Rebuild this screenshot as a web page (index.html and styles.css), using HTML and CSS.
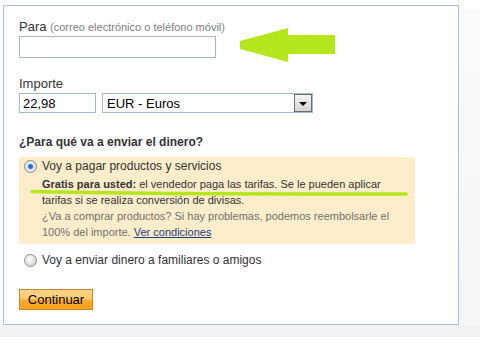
FILE: index.html
```html
<!DOCTYPE html>
<html>
<head>
	<meta charset="utf-8">
	<title>Enviar dinero</title>
	<link rel="stylesheet" href="styles.css">
</head>
<body>
	<div class="page">
		<div class="top">
			<div class="panel">
				<div class="field">
					<label class="lbl" for="to">Para <span class="hint">(correo electrónico o teléfono móvil)</span></label>
					<input id="to" class="txt to" type="text">
				</div>
				<div class="field">
					<label class="lbl" for="amt">Importe</label>
					<div class="row">
						<input id="amt" class="txt amt" type="text" value="22,98">
						<div class="sel">
							<span class="sel-val">EUR - Euros</span>
							<span class="sel-btn"><span class="tri"></span></span>
						</div>
					</div>
				</div>
				<h3 class="q">¿Para qué va a enviar el dinero?</h3>
				<div class="opt on">
					<span class="radio checked"></span>
					<div class="opt-body">
						<div class="opt-title">Voy a pagar productos y servicios</div>
						<p class="note first"><b>Gratis para usted:</b> el vendedor paga las tarifas. Se le pueden aplicar tarifas si se realiza conversión de divisas.</p>
						<p class="note sub">¿Va a comprar productos? Si hay problemas, podemos reembolsarle el 100% del importe. <a href="#">Ver condiciones</a></p>
					</div>
				</div>
				<div class="opt">
					<span class="radio"></span>
					<div class="opt-body">
						<div class="opt-title">Voy a enviar dinero a familiares o amigos</div>
					</div>
				</div>
				<button class="btn" type="button">Continuar</button>
			</div>
			<div class="side"></div>
		</div>
		<div class="strip"></div>

		<!-- markup drawn over the screenshot -->
		<svg class="arrow" width="96" height="36" viewBox="0 0 96 36">
			<polygon points="0,13 48,0 48,7 95,7 95,26 48,26 48,34 0,21" fill="#b5e61d"/>
		</svg>
		<svg class="uline" width="378" height="8" viewBox="0 0 378 8">
			<path d="M2,2.5 Q90,5 376,5" stroke="#b5e61d" stroke-width="3.5" fill="none" stroke-linecap="round"/>
		</svg>
	</div>
</body>
</html>
```

FILE: styles.css
```css
* {
	box-sizing: border-box;
}
body {
	margin: 0;
	background: #fff;
	font-family: "Liberation Sans", Arial, sans-serif;
	font-size: 13px;
	color: #333;
}
p {
	margin: 0;
}
.page {
	position: relative;
	width: 480px;
	height: 343px;
}
.top {
	display: flex;
	align-items: flex-end;
}
.panel {
	margin: 5px 0 0 3px;
	width: 456px;
	height: 320px;
	border: 1px solid #a9bfd7;
	background: #fff;
	padding: 13px 15px 0;
}
.side {
	flex: 1;
	height: 315px;
	background: linear-gradient(to bottom, #fafbfc, #f5f6f8);
}
.strip {
	height: 12px;
	background: #f2f2f4;
}
.field {
	margin-bottom: 18px;
}
.lbl {
	display: block;
	line-height: 16px;
	margin-bottom: 1px;
}
.hint {
	font-size: 11px;
	color: #808080;
}
.txt {
	display: block;
	border: 1px solid #a5b8d0;
	font-family: inherit;
	font-size: 13px;
	color: #000;
	padding: 0 3px;
	margin: 0;
	outline: none;
}
.to {
	width: 197px;
	height: 22px;
}
.row {
	display: flex;
	gap: 6px;
}
.amt {
	width: 77px;
	height: 20px;
}
.sel {
	display: flex;
	align-items: center;
	width: 211px;
	height: 20px;
	border: 1px solid #a5b8d0;
	color: #000;
}
.sel-val {
	flex: 1;
	padding-left: 4px;
}
.sel-btn {
	display: flex;
	align-items: center;
	justify-content: center;
	width: 18px;
	height: 18px;
	border: 1px solid #6e6e6e;
	background: linear-gradient(to bottom, #f4f4f4, #d4d4d4);
}
.tri {
	width: 0;
	height: 0;
	margin-top: 2px;
	border-left: 4px solid transparent;
	border-right: 4px solid transparent;
	border-top: 4px solid #000;
}
.q {
	font-size: 12px;
	margin: 21px 0 7px;
	color: #333;
	line-height: 16px;
}
.opt {
	display: flex;
	align-items: flex-start;
	gap: 5px;
	padding: 2px 5px 4px;
	width: 396px;
	font-size: 12px;
}
.opt.on {
	background: #fdedca;
}
.radio {
	flex: none;
	width: 13px;
	height: 13px;
	margin-top: 1px;
	border-radius: 50%;
	border: 1px solid #8d8d8d;
	background: radial-gradient(circle at 40% 35%, #fff, #d8d8d8 70%, #c4c4c4);
}
.radio.checked {
	background: radial-gradient(circle, #1d55b8 0, #3b7ad8 2px, #c7d9f2 3px, #f2f2f2 4px, #cfcfcf 6px);
}
.opt-title {
	line-height: 15px;
}
.note {
	font-size: 11px;
	line-height: 16px;
}
.note.first {
	margin-top: 2px;
}
.note.sub {
	color: #707070;
}
.note a {
	color: #1a3d7c;
}
.opt + .opt {
	margin-top: 7px;
}
.btn {
	display: block;
	margin-top: 17px;
	width: 74px;
	height: 21px;
	border: 1px solid #c8862a;
	background: linear-gradient(to bottom, #ffd386 0, #ffcc73 45%, #ffaa2a 55%, #ffa21f 100%);
	font-family: inherit;
	font-size: 13px;
	color: #000;
	padding: 0;
}
.arrow {
	position: absolute;
	left: 240px;
	top: 28px;
}
.uline {
	position: absolute;
	left: 30px;
	top: 189px;
}
```
